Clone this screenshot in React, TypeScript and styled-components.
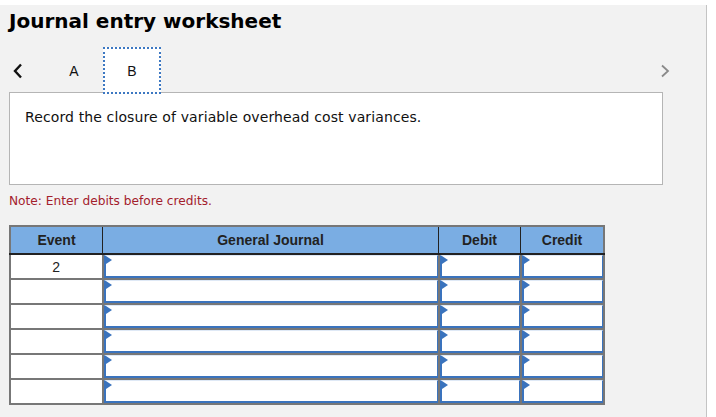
import React from 'react';
import styled, { createGlobalStyle } from 'styled-components';

const GlobalStyle = createGlobalStyle`
  html, body {
    margin: 0;
    padding: 0;
    background: #ffffff;
  }
`;

const Page = styled.div`
  padding-top: 5px;
  width: 707px;
`;

const Panel = styled.div`
  background: #f2f2f2;
  border-right: 1px solid #c4c4c4;
  height: 412px;
  padding: 0 0 0 9px;
  font-family: 'DejaVu Sans', Verdana, sans-serif;
`;

const Title = styled.h1`
  margin: 0;
  padding-top: 4px;
  font-size: 20px;
  line-height: 24px;
  font-weight: bold;
  color: #000;
`;

const TabRow = styled.div`
  display: flex;
  align-items: center;
  height: 47px;
  margin-top: 14px;
  margin-bottom: -2px;
  position: relative;
  z-index: 1;
  width: 654px;
`;

const Chevron = styled.button<{ $side: 'left' | 'right' }>`
  background: none;
  border: 0;
  padding: 0;
  width: ${({ $side }) => ($side === 'left' ? '33px' : '20px')};
  height: 20px;
  display: flex;
  align-items: center;
  justify-content: ${({ $side }) => ($side === 'left' ? 'flex-start' : 'center')};
  margin-left: ${({ $side }) => ($side === 'right' ? 'auto' : '3px')};
  margin-right: ${({ $side }) => ($side === 'right' ? '-12px' : '0')};
  svg {
    display: block;
  }
`;

const Tab = styled.div<{ $active?: boolean }>`
  width: 58px;
  height: 47px;
  box-sizing: border-box;
  display: flex;
  align-items: center;
  justify-content: center;
  font-family: 'Liberation Sans', Arial, sans-serif;
  font-size: 14px;
  color: #111;
  background: ${({ $active }) => ($active ? '#ffffff' : 'transparent')};
  border: 2px dotted ${({ $active }) => ($active ? '#3d78c2' : 'transparent')};
`;

const Prompt = styled.div`
  width: 654px;
  height: 93px;
  box-sizing: border-box;
  background: #ffffff;
  border: 1px solid #b5b5b5;
  padding: 15px 15px;
  font-size: 14px;
  line-height: 18px;
  color: #111;
  letter-spacing: 0.12px;
`;

const Note = styled.p`
  margin: 8px 0 0;
  font-size: 12.2px;
  line-height: 16px;
  color: #a3202c;
`;

const Table = styled.table`
  margin-top: 16px;
  border-collapse: collapse;
  table-layout: fixed;
  font-family: 'Liberation Sans', Arial, sans-serif;
  border: 2px solid #777;
`;

const Head = styled.th<{ $w: number }>`
  width: ${({ $w }) => $w}px;
  height: 26px;
  padding: 0;
  background: #7aade3;
  border-right: 1px solid #222;
  border-bottom: 2px solid #222;
  font-size: 14px;
  font-weight: bold;
  color: #222;
  text-align: center;
`;

const EventCell = styled.td`
  height: 23px;
  padding: 0;
  background: #ffffff;
  border: 2px solid #777;
  font-size: 14px;
  color: #222;
  text-align: center;
`;

const InputCell = styled.td`
  padding: 0;
  border: 2px solid #777;
  background: #777;
`;

const Field = styled.div`
  position: relative;
  height: 20px;
  background: #ffffff;
  border-top: 1px solid #dfe9f6;
  border-left: 2px solid #3a73bd;
  border-right: 1px solid #3a73bd;
  border-bottom: 2px solid #3a73bd;
  &::before {
    content: '';
    position: absolute;
    left: 0;
    top: 0;
    border-top: 4px solid transparent;
    border-bottom: 4px solid transparent;
    border-left: 6px solid #3a73bd;
  }
`;

const rows = ['2', '', '', '', '', ''];

export default function App() {
  return (
    <Page>
      <GlobalStyle />
      <Panel>
        <Title>Journal entry worksheet</Title>
        <TabRow>
          <Chevron $side="left" aria-label="Previous">
            <svg width="12" height="16" viewBox="0 0 12 16">
              <path d="M9 1.5 L3 8 L9 14.5" fill="none" stroke="#111" strokeWidth="2.4" />
            </svg>
          </Chevron>
          <Tab>A</Tab>
          <Tab $active>B</Tab>
          <Chevron $side="right" aria-label="Next">
            <svg width="10" height="14" viewBox="0 0 10 14">
              <path d="M2 1.5 L8 7 L2 12.5" fill="none" stroke="#8a8a8a" strokeWidth="1.8" />
            </svg>
          </Chevron>
        </TabRow>
        <Prompt>Record the closure of variable overhead cost variances.</Prompt>
        <Note>Note: Enter debits before credits.</Note>
        <Table>
          <thead>
            <tr>
              <Head $w={91}>Event</Head>
              <Head $w={335}>General Journal</Head>
              <Head $w={81}>Debit</Head>
              <Head $w={82}>Credit</Head>
            </tr>
          </thead>
          <tbody>
            {rows.map((ev, i) => (
              <tr key={i}>
                <EventCell>{ev}</EventCell>
                <InputCell>
                  <Field />
                </InputCell>
                <InputCell>
                  <Field />
                </InputCell>
                <InputCell>
                  <Field />
                </InputCell>
              </tr>
            ))}
          </tbody>
        </Table>
      </Panel>
    </Page>
  );
}
